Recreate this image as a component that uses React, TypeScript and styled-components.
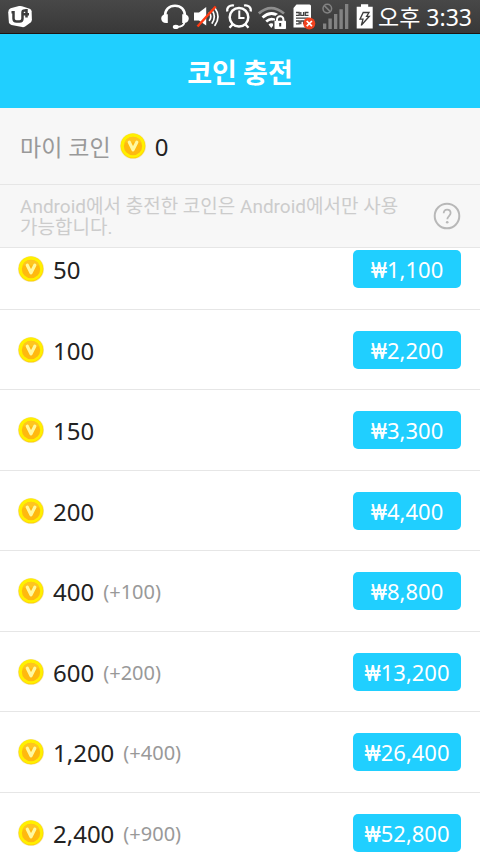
import React, { useLayoutEffect, useRef } from "react";
import styled, { createGlobalStyle } from "styled-components";

const GlobalStyle = createGlobalStyle`
  * { box-sizing: border-box; }
  body {
    margin: 0;
    background: #ffffff;
    font-family: "Noto Sans", "Noto Sans CJK KR", sans-serif;
  }
  button { font-family: inherit; border: 0; cursor: pointer; }
`;

const Screen = styled.div`
  display: flex;
  flex-direction: column;
  height: 100vh;
`;

const StatusBar = styled.div`
  display: flex;
  flex: none;
  align-items: center;
  gap: 5px;
  height: 34px;
  padding: 0 8px;
  background: linear-gradient(#484848, #383838);
  border-bottom: 1px solid #1d1512;
  color: #ffffff;

  svg { display: block; flex: none; }
`;

const Spacer = styled.div`
  flex: 1;
`;

const Clock = styled.time`
  font-size: 23px;
  line-height: 32px;
  white-space: nowrap;
`;

const TitleBar = styled.header`
  display: flex;
  flex: none;
  align-items: center;
  justify-content: center;
  height: 74px;
  padding-top: 2px;
  background: #20cfff;
`;

const Title = styled.h1`
  margin: 0;
  color: #ffffff;
  font-size: 27px;
  font-weight: 700;
  font-family: "Noto Sans CJK KR", sans-serif;
  line-height: 40px;
`;

const Balance = styled.section`
  display: flex;
  flex: none;
  align-items: center;
  gap: 9px;
  height: 77px;
  padding: 0 20px;
  background: #f7f7f7;
  border-bottom: 1px solid #e6e6e6;
`;

const BalanceLabel = styled.span`
  padding-top: 2px;
  color: #999999;
  font-size: 23px;
  line-height: 32px;
`;

const Notice = styled.section`
  display: flex;
  flex: none;
  align-items: center;
  justify-content: space-between;
  gap: 20px;
  height: 63px;
  padding: 0 19px 0 20px;
  background: #f7f7f7;
  border-bottom: 1px solid #e6e6e6;
`;

const NoticeText = styled.p`
  margin: 0;
  padding-top: 2px;
  color: #cccccc;
  font-family: Roboto, "Noto Sans CJK KR", sans-serif;
  font-size: 19px;
  line-height: 21px;
  word-break: keep-all;
`;

const HelpButton = styled.button`
  flex: none;
  width: 28px;
  height: 28px;
  padding: 0;
  background: none;

  svg { display: block; }
`;

const ProductList = styled.ul`
  flex: 1;
  min-height: 0;
  margin: 0;
  padding: 0;
  overflow-y: auto;
  list-style: none;
  scrollbar-width: none;
`;

const ProductRow = styled.li`
  display: flex;
  align-items: center;
  gap: 9px;
  height: 80px;
  padding: 0 19px 0 18px;
  border-bottom: 1px solid #e6e6e6;

  &:nth-child(odd) { height: 81px; }
`;

const Amount = styled.span`
  padding-top: 2px;
  color: #222222;
  font-size: 24px;
  line-height: 32px;
`;

const Bonus = styled.span`
  flex: 1;
  padding-top: 2px;
  color: #999999;
  font-size: 20px;
  line-height: 32px;
`;

const PriceButton = styled.button`
  flex: none;
  width: 108px;
  height: 38px;
  margin-left: auto;
  padding: 0;
  border-radius: 5px;
  background: #20cfff;
  color: #ffffff;
  font-size: 22px;
  line-height: 38px;
`;

const Currency = styled.span`
  font-family: Roboto, "Liberation Sans", sans-serif;
`;

const CoinIcon = () => (
  <svg width="26" height="26" viewBox="0 0 26 26" aria-hidden="true">
    <circle cx="13" cy="13" r="13" fill="#f3e3b4" />
    <circle cx="13" cy="13" r="12.3" fill="#ffd400" />
    <circle cx="12.8" cy="12.6" r="12" fill="#fff000" />
    <circle cx="13" cy="13" r="9.2" fill="#ffb90f" />
    <path d="M4.6 9.5a9.2 9.2 0 0 1 16.8 0z" fill="#ffc51f" />
    <path d="M9.3 9.2 13 16.800 16.800 9.200" fill="none" stroke="#fff9a0" strokeWidth="3.200" strokeLinecap="round" strokeLinejoin="round" />
  </svg>
);

const CarrierLogo = () => (
  <svg width="24" height="33" viewBox="0 0 24 33" aria-hidden="true">
    <path d="M2.6 8.3 11 6.1q1.5-.3 3 .1l7.7 2.6q1.8.7 1.9 2.5l.3 8.2q0 1.8-1.3 3l-5.5 4q-1.3.9-3 .6l-10.6-2.2Q1.5 24.400.9 22.500L.2 12.500Q.2 9.300 2.600 8.300Z" fill="#fff" />
    <path d="M3.500 12.300H5.500V18.500Q5.500 21.500 8.500 21.500H11.500Q14.500 21.500 14.500 18.500V12.500Q14.500 10.500 16.500 10.500H18.500M14.500 14.300H21M18.500 9V17.500" fill="none" stroke="#3d3d3d" strokeWidth="2.500" />
  </svg>
);

const HeadsetIcon = () => (
  <svg width="28" height="33" viewBox="0 0 28 33" aria-hidden="true">
    <path d="M4 16C4 9.500 8.200 5.700 14 5.700S24 9.500 24 16" fill="none" stroke="#fff" strokeWidth="2.600" />
    <path d="M6.800 14.200V23H5.200C2 23 .2 21 .2 18.500S2 14.200 5.200 14.200zM21.200 14.200V23h1.600c3.200 0 5-2 5-4.500s-1.800-4.300-5-4.300z" fill="#fff" />
    <path d="M23.500 22.500C22.800 25.500 20.500 26.700 16 26.900" fill="none" stroke="#fff" strokeWidth="1.800" />
    <ellipse cx="14.800" cy="26.900" rx="3" ry="2.100" fill="#fff" />
  </svg>
);

const MutedIcon = () => (
  <svg width="26" height="33" viewBox="0 0 26 33" aria-hidden="true">
    <path d="M0 12.500h5L12.200 7v18.500L5 20.500H0z" fill="#fff" />
    <path d="M15.500 12.800q2.600 3.700 0 7.500M18.200 10.500q4.200 6 0 12.500M21 8.300q6 8.200 0 17" fill="none" stroke="#fff" strokeWidth="1.700" strokeLinecap="round" />
    <path d="M3.500 26.500 21.700 6.500" stroke="#ff3a12" strokeWidth="2.500" />
  </svg>
);

const AlarmIcon = () => (
  <svg width="28" height="33" viewBox="0 0 28 33" aria-hidden="true">
    <circle cx="14" cy="17.300" r="9.300" fill="none" stroke="#fff" strokeWidth="2.500" />
    <path d="M14.300 10.500V18H19.500" fill="none" stroke="#fff" strokeWidth="2" />
    <path d="M2.300 11.500C1.500 7.500 4.800 4.600 9 5.500M25.700 11.500C26.500 7.500 23.200 4.600 19 5.500" fill="none" stroke="#fff" strokeWidth="2.200" />
    <path d="M7.500 24.500 4.500 27.800M20.500 24.500l3 3.300" stroke="#fff" strokeWidth="2.400" />
  </svg>
);

const SecureWifiIcon = () => (
  <svg width="30" height="33" viewBox="0 0 30 33" aria-hidden="true">
    <path d="M.8 13.500Q13 2.800 26 13.500" fill="none" stroke="#8e8e8e" strokeWidth="2.800" />
    <path d="M4.500 17.500Q13.500 9.500 22 17.200M8.200 21.500Q13.500 17 18 21" fill="none" stroke="#fff" strokeWidth="2.800" />
    <path d="M10.500 24.500Q13.300 22 16 24.500L13.300 28z" fill="#fff" />
    <path d="M15 20.500h2V17q1-3 4.800-3.500 4.500.5 5.200 4.500v2.500h2V30H15z" fill="#414141" />
    <path d="M19 21.500V19.500a3.200 3.200 0 0 1 6.400 0v2" fill="none" stroke="#fff" strokeWidth="2" />
    <rect x="16.500" y="20.700" width="11.500" height="8.300" rx=".8" fill="#fff" />
    <path d="M22.200 23v3.500" stroke="#333" strokeWidth="2" />
  </svg>
);

const NoSimIcon = () => (
  <svg width="23" height="33" viewBox="0 0 23 33" aria-hidden="true">
    <path d="M3.500 4.500H16.500q1.500 0 1.500 1.500V27.500H.5V8z" fill="#fff" />
    <path d="M3 12.500h3.200v2.800H3M15.500 12.500h-3.200v2.800h3.200M3 23.800h3.200V21H3M15.500 23.800h-3.200V21h3.200M7.800 12v3.300h2.800V12M7.800 24.300V21h2.800v3.300M3 18.200h12.500" fill="none" stroke="#424242" strokeWidth="1.300" />
    <circle cx="16.300" cy="23.600" r="6" fill="#f0411e" />
    <path d="M13.700 21 18.900 26.200M18.900 21 13.700 26.200" stroke="#fff" strokeWidth="1.700" />
  </svg>
);

const NoSignalIcon = () => (
  <svg width="28" height="33" viewBox="0 0 28 33" aria-hidden="true">
    <path d="M2 23.500h3.300V29H2zM7.400 18.500h3.400V29H7.400zM13 14h3.300v15H13zM18.400 9.300h3.400V29h-3.400zM24 4h3.300v25H24z" fill="#828282" />
    <circle cx="6.300" cy="8.600" r="4.300" fill="none" stroke="#828282" strokeWidth="1.500" />
    <path d="M3.300 5.600 9.300 11.600" stroke="#828282" strokeWidth="1.500" />
  </svg>
);

const ChargingIcon = () => (
  <svg width="19" height="33" viewBox="0 0 19 33" aria-hidden="true">
    <path d="M7 4.300h7.200v2.400h4.500v21.800H2.700V6.700H7z" fill="#fff" />
    <path d="M9.200 12.500H15L12.600 16.300h2.700L7.300 25.300 9 19.200H6z" fill="#fff" stroke="#3d3d3d" strokeWidth="1.300" />
  </svg>
);

const HelpIcon = () => (
  <svg width="28" height="28" viewBox="0 0 28 28" aria-hidden="true">
    <circle cx="14" cy="14" r="12.300" fill="none" stroke="#b8b8b8" strokeWidth="2" />
    <path d="M10.700 11.200C10.700 8.900 12 7.600 14.100 7.600s3.500 1.300 3.500 3.400c0 2.800-3.300 3.300-3.300 6.200" fill="none" stroke="#b8b8b8" strokeWidth="1.800" />
    <circle cx="14.200" cy="20.200" r="1.300" fill="#b8b8b8" />
  </svg>
);

const products = [
  { coins: "50", price: "1,100" },
  { coins: "100", price: "2,200" },
  { coins: "150", price: "3,300" },
  { coins: "200", price: "4,400" },
  { coins: "400", bonus: "(+100)", price: "8,800" },
  { coins: "600", bonus: "(+200)", price: "13,200" },
  { coins: "1,200", bonus: "(+400)", price: "26,400" },
  { coins: "2,400", bonus: "(+900)", price: "52,800" },
];

const INITIAL_SCROLL = 19;

export default function App() {
  const listRef = useRef<HTMLUListElement>(null);

  useLayoutEffect(() => {
    if (listRef.current) listRef.current.scrollTop = INITIAL_SCROLL;
  }, []);

  return (
    <Screen>
      <GlobalStyle />
      <StatusBar>
        <CarrierLogo />
        <Spacer />
        <HeadsetIcon />
        <MutedIcon />
        <AlarmIcon />
        <SecureWifiIcon />
        <NoSimIcon />
        <NoSignalIcon />
        <ChargingIcon />
        <Clock dateTime="15:33">오후 3:33</Clock>
      </StatusBar>
      <TitleBar>
        <Title>코인 충전</Title>
      </TitleBar>
      <Balance>
        <BalanceLabel>마이 코인</BalanceLabel>
        <CoinIcon />
        <Amount>0</Amount>
      </Balance>
      <Notice>
        <NoticeText>Android에서 충전한 코인은 Android에서만 사용 가능합니다.</NoticeText>
        <HelpButton type="button" aria-label="도움말">
          <HelpIcon />
        </HelpButton>
      </Notice>
      <ProductList ref={listRef}>
        {products.map(({ coins, bonus, price }) => (
          <ProductRow key={coins}>
            <CoinIcon />
            <Amount>{coins}</Amount>
            {bonus && <Bonus>{bonus}</Bonus>}
            <PriceButton type="button">
              <Currency>₩</Currency>
              {price}
            </PriceButton>
          </ProductRow>
        ))}
      </ProductList>
    </Screen>
  );
}
